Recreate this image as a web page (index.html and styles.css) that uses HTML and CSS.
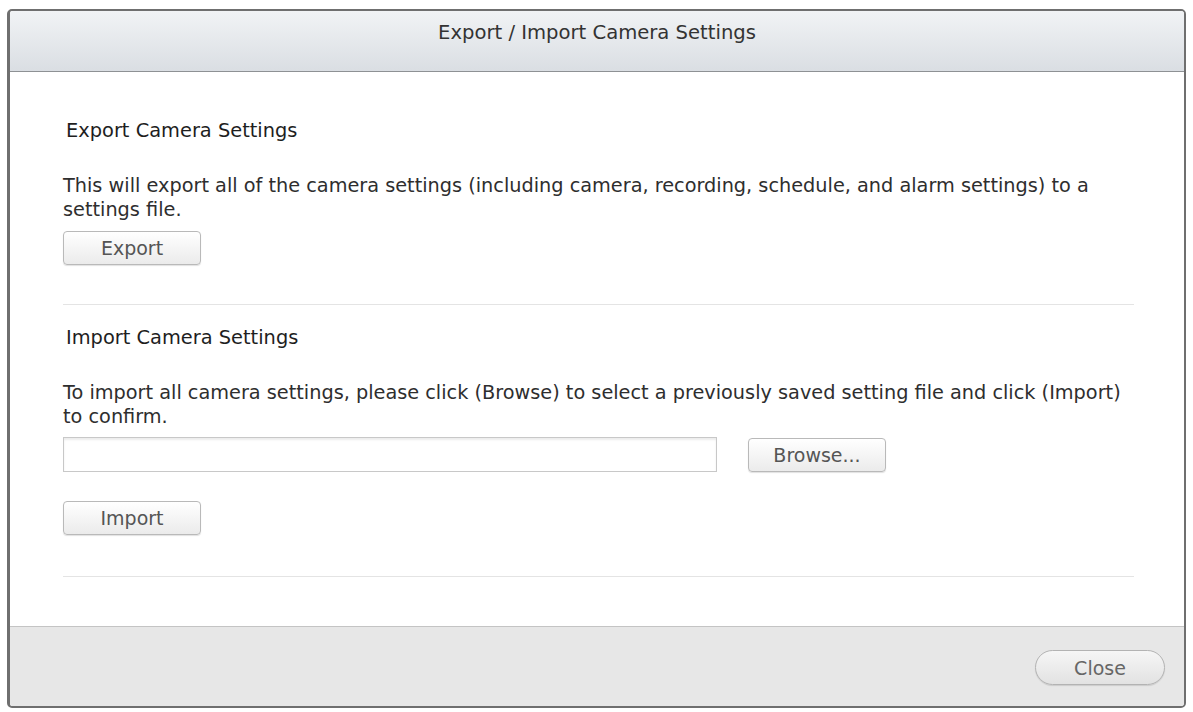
FILE: index.html
```html
<!DOCTYPE html>
<html lang="en">
<head>
<meta charset="utf-8">
<title>Export / Import Camera Settings</title>
<link rel="stylesheet" href="styles.css">
</head>
<body>
<div class="dialog">
  <div class="dialog-header">Export / Import Camera Settings</div>
  <div class="dialog-body">
    <section class="section section-export">
      <h2 class="section-title">Export Camera Settings</h2>
      <p class="section-text">This will export all of the camera settings (including camera, recording, schedule, and alarm settings) to a settings file.</p>
      <button class="btn btn-wide">Export</button>
    </section>
    <div class="divider"></div>
    <section class="section section-import">
      <h2 class="section-title">Import Camera Settings</h2>
      <p class="section-text">To import all camera settings, please click (Browse) to select a previously saved setting file and click (Import) to confirm.</p>
      <div class="file-row">
        <div class="file-input"></div>
        <button class="btn btn-wide">Browse...</button>
      </div>
      <button class="btn btn-wide btn-import">Import</button>
    </section>
    <div class="divider"></div>
  </div>
  <div class="dialog-footer">
    <button class="btn btn-close">Close</button>
  </div>
</div>
</body>
</html>
```

FILE: styles.css
```css
html, body {
  margin: 0;
  padding: 0;
  background: #ffffff;
}

body {
  font-family: "DejaVu Sans", sans-serif;
  color: #333333;
  padding: 9px 7px 0 7px;
  width: 1193px;
  height: 712px;
  box-sizing: border-box;
}

.dialog {
  width: 1179px;
  height: 699px;
  box-sizing: border-box;
  border: 2px solid #6f6f6f;
  border-left-width: 3px;
  border-radius: 5px;
  display: flex;
  flex-direction: column;
  overflow: hidden;
  background: #ffffff;
}

.dialog-header {
  height: 61px;
  flex: none;
  box-sizing: border-box;
  background: linear-gradient(#f1f3f5, #dadee3);
  border-bottom: 1px solid #8e9194;
  text-align: center;
  font-size: 19.6px;
  line-height: 22px;
  padding-top: 11px;
  color: #333333;
}

.dialog-body {
  flex: 1;
  padding: 0 50px 0 53px;
}

.section {
  display: flex;
  flex-direction: column;
  align-items: flex-start;
}

.section-export {
  padding-top: 47px;
  padding-bottom: 39px;
}

.section-import {
  padding-top: 21px;
  padding-bottom: 41px;
}

.section-title {
  margin: 0 0 31px 3px;
  font-size: 19.4px;
  font-weight: normal;
  line-height: 24px;
  color: #1e1e1e;
}

.section-text {
  margin: 0 0 9px 0;
  font-size: 19.3px;
  line-height: 24px;
  color: #2e2e2e;
}

.section-import .section-text {
  margin-bottom: 8px;
}

.divider {
  height: 0;
  border-top: 1px solid #e4e4e4;
}

.btn {
  font-family: inherit;
  font-size: 19px;
  color: #555555;
  background: linear-gradient(#ffffff, #ebebeb);
  border: 1px solid #b9b9b9;
  border-radius: 4px;
  box-shadow: 0 1px 1px rgba(0, 0, 0, 0.12);
  height: 34px;
  padding: 0;
  line-height: 32px;
}

.btn-wide {
  width: 138px;
}

.file-row {
  display: flex;
  align-items: center;
  gap: 31px;
}

.file-input {
  width: 654px;
  height: 35px;
  box-sizing: border-box;
  border: 1px solid #c8c8c8;
  box-shadow: inset 0 2px 2px rgba(0, 0, 0, 0.08);
  background: #ffffff;
}

.btn-import {
  margin-top: 29px;
}

.dialog-footer {
  height: 80px;
  flex: none;
  box-sizing: border-box;
  border-top: 1px solid #c4c4c4;
  background: #e7e7e7;
  display: flex;
  justify-content: flex-end;
  align-items: flex-start;
  padding: 23px 19px 0 0;
}

.btn-close {
  width: 130px;
  height: 35px;
  border-radius: 18px;
  border-color: #b3b3b3;
  background: linear-gradient(#f6f6f6, #e2e2e2);
  color: #666666;
}
```
